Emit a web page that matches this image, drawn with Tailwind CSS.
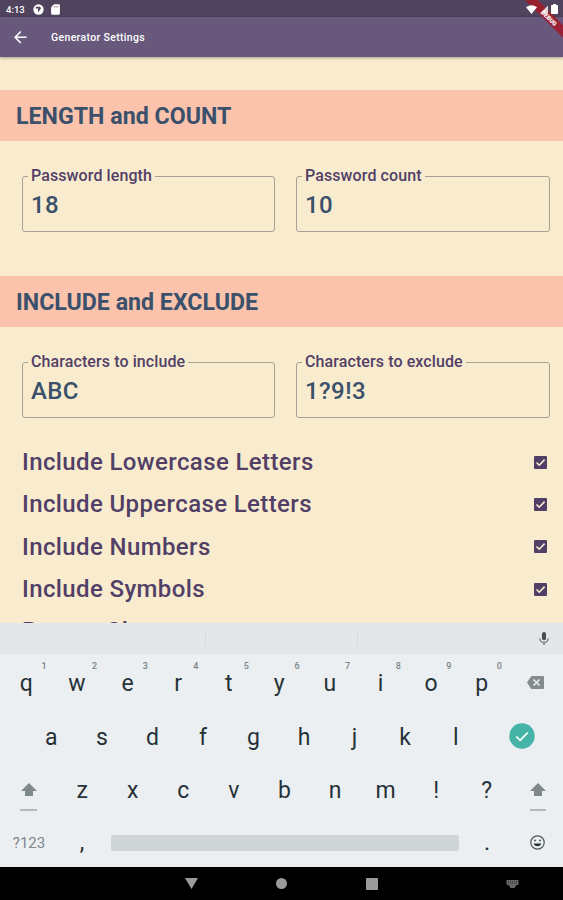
<!DOCTYPE html>
<html lang="en">
<head>
  <meta charset="UTF-8" />
  <meta name="viewport" content="width=device-width, initial-scale=1.0" />
  <title>Generator Settings</title>
  <script src="https://cdn.jsdelivr.net/npm/@tailwindcss/browser@4"></script>
</head>
<body class="w-[563px] h-[900px] overflow-hidden bg-[#f9ecce] font-['Roboto',sans-serif]">
  <div class="relative flex flex-col h-full overflow-hidden">

    <!-- Status bar -->
    <div class="h-[17px] shrink-0 bg-[#50435d] flex items-center pl-[6px] pr-[5px] text-white">
      <span class="text-[9.5px] font-medium leading-none w-[28px] mt-[2px]">4:13</span>
      <svg class="size-[11px] -ml-px mt-px" viewBox="0 0 12 12"><circle cx="6" cy="6" r="5.6" fill="#fff"/><path d="M3 3h4.500a2 2 0 0 1 0 3.500L5.500 9V5H3z" fill="#50435d"/></svg>
      <svg class="size-[11px] ml-[6px] mt-px" viewBox="0 0 10 10"><path d="M3.600.3H8a1 1 0 0 1 1 1v7.400a1 1 0 0 1-1 1H2a1 1 0 0 1-1-1V3z" fill="#fff"/><path d="M4 1.800v1.500M5.500 1.800v1.500M7 1.800v1.500" stroke="#50435d" stroke-width=".5"/></svg>
      <div class="relative z-10 ml-auto flex items-center gap-[3px] mt-px">
        <svg class="w-[11px] h-[9px]" viewBox="0 0 11 9"><path d="M5.500 9 0 2.200Q5.500-1.800 11 2.200z" fill="#fff"/></svg>
        <svg class="w-[8px] h-[9px]" viewBox="0 0 9 9"><path d="M9 0v9H0z" fill="#fff" fill-opacity=".8"/></svg>
        <svg class="w-[7px] h-[10px]" viewBox="0 0 7 10"><path d="M2 0h3v1h1.300q.7 0 .7.700v7.600q0 .7-.7.700H.7Q0 10 0 9.300V1.700Q0 1 .7 1H2z" fill="#fff"/></svg>
      </div>
    </div>

    <!-- App bar -->
    <header class="relative h-[39.5px] shrink-0 bg-[#67587c] flex items-center pl-[14px] text-white shadow-[0_1px_3px_rgba(0,0,0,0.35)]">
      <svg class="size-[12.5px] mt-px" viewBox="4 4 16 16"><path d="M20 11H7.830l5.590-5.590L12 4l-8 8 8 8 1.410-1.410L7.830 13H20z" fill="#fff"/></svg>
      <h1 class="ml-[24.5px] mt-[2px] text-[10.5px] font-medium tracking-[0.34px]">Generator Settings</h1>
    </header>

    <!-- Debug ribbon -->
    <div class="absolute top-0 right-0 size-[44px] overflow-hidden">
      <div class="absolute top-[12px] left-[-6px] w-[70px] h-[9px] rotate-45 bg-[#a01c2b]/90 text-white text-[6px] font-black leading-[9px] text-center pl-[4px]">DEBUG</div>
    </div>

    <!-- Settings -->
    <main class="h-[566.5px] shrink-0 overflow-hidden">
      <h2 class="mt-[33.5px] h-[51px] bg-[#fbc3ab] pl-[16px] pt-[2px] flex items-center text-[23.2px] font-bold text-[#3a506b]">LENGTH and COUNT</h2>
      <div class="flex gap-[21px] pl-[22px] pr-[13px] mt-[26px]">
        <fieldset class="w-[253px] h-[65px] border border-[#ab9e95] rounded-[3px] pl-[5px]">
          <legend class="px-[3px] h-[18px] leading-[18px] text-[16px] font-medium tracking-[0.1px] text-[#523f67]">Password length</legend>
          <div class="pl-[3px] mt-[6px] text-[24px] leading-[28px] font-medium tracking-[0.4px] text-[#3a506b]">18</div>
        </fieldset>
        <fieldset class="w-[254px] h-[65px] border border-[#ab9e95] rounded-[3px] pl-[5px]">
          <legend class="px-[3px] h-[18px] leading-[18px] text-[16px] font-medium tracking-[0.1px] text-[#523f67]">Password count</legend>
          <div class="pl-[3px] mt-[6px] text-[24px] leading-[28px] font-medium tracking-[0.4px] text-[#3a506b]">10</div>
        </fieldset>
      </div>

      <h2 class="mt-[44px] h-[51px] bg-[#fbc3ab] pl-[16px] pt-[2px] flex items-center text-[23.2px] font-bold text-[#3a506b]">INCLUDE and EXCLUDE</h2>
      <div class="flex gap-[21px] pl-[22px] pr-[13px] mt-[26px]">
        <fieldset class="w-[253px] h-[65px] border border-[#ab9e95] rounded-[3px] pl-[5px]">
          <legend class="px-[3px] h-[18px] leading-[18px] text-[16px] font-medium tracking-[0.1px] text-[#523f67]">Characters to include</legend>
          <div class="pl-[3px] mt-[6px] text-[24px] leading-[28px] font-medium tracking-[0.4px] text-[#3a506b]">ABC</div>
        </fieldset>
        <fieldset class="w-[254px] h-[65px] border border-[#ab9e95] rounded-[3px] pl-[5px]">
          <legend class="px-[3px] h-[18px] leading-[18px] text-[16px] font-medium tracking-[0.1px] text-[#523f67]">Characters to exclude</legend>
          <div class="pl-[3px] mt-[6px] text-[24px] leading-[28px] font-medium tracking-[0.4px] text-[#3a506b]">1?9!3</div>
        </fieldset>
      </div>

      <ul class="mt-[23px] pl-[22px] pr-[16px] text-[24px] font-medium tracking-[0.38px] text-[#523f67]">
        <li class="h-[42.3px] flex items-center justify-between">Include Lowercase Letters
          <svg class="size-[13px]" viewBox="0 0 13 13"><rect width="13" height="13" rx="1" fill="#523f67"/><path d="M2.500 6.500 5.200 9.200 10.600 3.600" fill="none" stroke="#f9ecce" stroke-width="1.600"/></svg>
        </li>
        <li class="h-[42.3px] flex items-center justify-between">Include Uppercase Letters
          <svg class="size-[13px]" viewBox="0 0 13 13"><rect width="13" height="13" rx="1" fill="#523f67"/><path d="M2.500 6.500 5.200 9.200 10.600 3.600" fill="none" stroke="#f9ecce" stroke-width="1.600"/></svg>
        </li>
        <li class="h-[42.3px] flex items-center justify-between">Include Numbers
          <svg class="size-[13px]" viewBox="0 0 13 13"><rect width="13" height="13" rx="1" fill="#523f67"/><path d="M2.500 6.500 5.200 9.200 10.600 3.600" fill="none" stroke="#f9ecce" stroke-width="1.600"/></svg>
        </li>
        <li class="h-[42.3px] flex items-center justify-between">Include Symbols
          <svg class="size-[13px]" viewBox="0 0 13 13"><rect width="13" height="13" rx="1" fill="#523f67"/><path d="M2.500 6.500 5.200 9.200 10.600 3.600" fill="none" stroke="#f9ecce" stroke-width="1.600"/></svg>
        </li>
        <li class="h-[42.3px] flex items-center justify-between">Repeat Characters</li>
      </ul>
    </main>

    <!-- Suggestion strip -->
    <div class="h-[31px] shrink-0 bg-[#e4e7e9] flex items-center pr-[13px]">
      <div class="w-[205px]"></div>
      <div class="w-[153px] h-[17px] border-x border-[#d9dcde]"></div>
      <svg class="ml-auto w-[12px] h-[13px] -mt-px" viewBox="5 2 14 19"><path d="M12 14a3 3 0 0 0 3-3V5a3 3 0 0 0-6 0v6a3 3 0 0 0 3 3z" fill="#45504f"/><path d="M17.300 11a5.300 5.300 0 0 1-10.600 0H5a7 7 0 0 0 6 6.900V21h2v-3.100A7 7 0 0 0 19 11z" fill="#6b7475"/></svg>
    </div>

    <!-- Keyboard -->
    <div class="h-[213px] shrink-0 bg-[#eceff1] pt-[3px] text-[23px] text-[#263238]">
      <div class="h-[53px] flex items-center">
        <div class="w-[507px] h-full grid grid-cols-10 text-center leading-[54px] pl-px">
          <div class="relative">q<span class="absolute right-[5px] top-[3px] text-[9px] leading-[12px] font-medium text-[#7a8488]">1</span></div>
          <div class="relative">w<span class="absolute right-[5px] top-[3px] text-[9px] leading-[12px] font-medium text-[#7a8488]">2</span></div>
          <div class="relative">e<span class="absolute right-[5px] top-[3px] text-[9px] leading-[12px] font-medium text-[#7a8488]">3</span></div>
          <div class="relative">r<span class="absolute right-[5px] top-[3px] text-[9px] leading-[12px] font-medium text-[#7a8488]">4</span></div>
          <div class="relative">t<span class="absolute right-[5px] top-[3px] text-[9px] leading-[12px] font-medium text-[#7a8488]">5</span></div>
          <div class="relative">y<span class="absolute right-[5px] top-[3px] text-[9px] leading-[12px] font-medium text-[#7a8488]">6</span></div>
          <div class="relative">u<span class="absolute right-[5px] top-[3px] text-[9px] leading-[12px] font-medium text-[#7a8488]">7</span></div>
          <div class="relative">i<span class="absolute right-[5px] top-[3px] text-[9px] leading-[12px] font-medium text-[#7a8488]">8</span></div>
          <div class="relative">o<span class="absolute right-[5px] top-[3px] text-[9px] leading-[12px] font-medium text-[#7a8488]">9</span></div>
          <div class="relative">p<span class="absolute right-[5px] top-[3px] text-[9px] leading-[12px] font-medium text-[#7a8488]">0</span></div>
        </div>
        <svg class="ml-[20px] w-[17px] h-[13px] -mt-[2px]" viewBox="0 0 17 13"><path d="M5 0h11q1 0 1 1v11q0 1-1 1H5q-.6 0-1-.6L0 6.500 4 .6Q4.400 0 5 0z" fill="#838b8f"/><path d="m6.500 3.500 6 6m0-6-6 6" stroke="#eceff1" stroke-width="1.600"/></svg>
      </div>

      <div class="h-[53px] flex items-center pl-[26px]">
        <div class="w-[455px] h-full grid grid-cols-9 text-center leading-[55px]">
          <div>a</div><div>s</div><div>d</div><div>f</div><div>g</div><div>h</div><div>j</div><div>k</div><div>l</div>
        </div>
        <svg class="ml-[28px] -mt-px size-[26px]" viewBox="0 0 26 26"><circle cx="13" cy="13" r="12.700" fill="#45b3a5"/><path d="m7.300 13.500 3.800 3.800 7.600-7.600" fill="none" stroke="#fff" stroke-width="1.700"/></svg>
      </div>

      <div class="h-[53px] flex items-center">
        <div class="w-[57px] flex flex-col items-center gap-[13px] pt-[15px]">
          <svg class="w-[16px] h-[13px]" viewBox="0 0 16 13"><path d="m8 0 8 8h-4v5H4V8H0z" fill="#7f888b"/></svg>
          <div class="w-[17px] h-[2px] bg-[#b4babc]"></div>
        </div>
        <div class="w-[455px] h-full grid grid-cols-9 text-center leading-[56px]">
          <div>z</div><div>x</div><div>c</div><div>v</div><div>b</div><div>n</div><div>m</div><div>!</div><div>?</div>
        </div>
        <div class="w-[51px] flex flex-col items-center gap-[13px] pt-[15px]">
          <svg class="w-[16px] h-[13px]" viewBox="0 0 16 13"><path d="m8 0 8 8h-4v5H4V8H0z" fill="#7f888b"/></svg>
          <div class="w-[16px] h-[2px] bg-[#b4babc]"></div>
        </div>
      </div>

      <div class="h-[53px] flex items-center">
        <div class="w-[57px] pl-px pt-[2px] text-center text-[15px] text-[#7c868a]">?123</div>
        <div class="w-[50px] pt-[2px] text-center">,</div>
        <div class="ml-[4px] w-[348px] h-[16px] rounded-[2px] bg-[#cfd5d6]"></div>
        <div class="w-[56px] pt-[2px] text-center">.</div>
        <svg class="ml-[15px] size-[15px]" viewBox="0 0 15 15"><circle cx="7.500" cy="7.500" r="6.700" fill="none" stroke="#4c5659" stroke-width="1.200"/><circle cx="5" cy="5.600" r="1" fill="#4c5659"/><circle cx="10" cy="5.600" r="1" fill="#4c5659"/><path d="M3.700 8.500h7.600a3.900 3.500 0 0 1-7.600 0z" fill="#263238"/></svg>
      </div>
    </div>

    <!-- Navigation bar -->
    <nav class="h-[33px] shrink-0 bg-black flex items-center pl-[185px]">
      <svg class="w-[13px] h-[11px]" viewBox="0 0 13 11"><path d="M0 0h13L6.500 11z" fill="#9b9b9b"/></svg>
      <div class="ml-[78px] size-[11px] rounded-full bg-[#9b9b9b]"></div>
      <div class="ml-[79px] size-[12px] rounded-[1px] bg-[#9b9b9b]"></div>
      <svg class="ml-[128px] w-[13px] h-[8px]" viewBox="0 0 13 8"><path d="M.5 0h12v4.500L10 5.500 8.500 8h-4L3 5.500.5 4.500z" fill="#666"/><path d="M2 1.500h9M2 3.200h9" stroke="#222" stroke-width=".7" stroke-dasharray="1 1"/></svg>
    </nav>
  </div>
</body>
</html>
